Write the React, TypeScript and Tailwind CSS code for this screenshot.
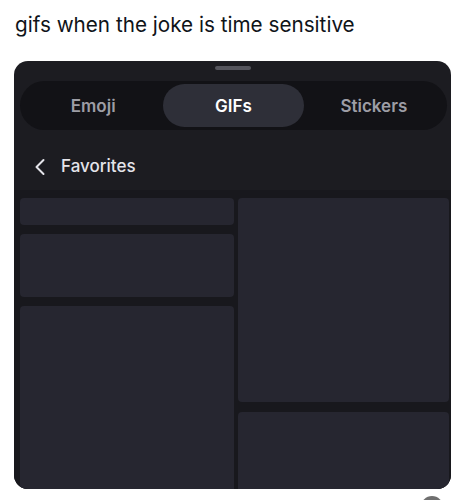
import { useState } from "react";

const tabs = ["Emoji", "GIFs", "Stickers"];

function Tile({ className }: { className: string }) {
  return <div className={`rounded-[4px] bg-[#262630] ${className}`} />;
}

export default function App() {
  const [active, setActive] = useState("GIFs");

  return (
    <main className="min-h-screen bg-white font-['Inter',sans-serif]">
      <p className="px-[15px] pt-[12px] text-[20.7px] leading-[26px] text-[#0f1419] font-['Inter',sans-serif]">
        gifs when the joke is time sensitive
      </p>

      {/* Picker panel */}
      <section className="ml-[14px] mt-[23px] flex h-[428px] w-[437px] flex-col overflow-hidden rounded-[14px] bg-[#1c1c21]">
        <div className="mx-auto mt-[5px] h-[4px] w-[36px] rounded-full bg-[#55555d]" />

        <div className="ml-[6px] mr-[4px] mt-[11px] grid h-[49px] grid-cols-3 rounded-full bg-[#121216] p-[3px]">
          {tabs.map((t) => (
            <button
              key={t}
              onClick={() => setActive(t)}
              className={`rounded-full pt-[3px] text-[17px] font-semibold ${
                active === t ? "bg-[#2e2f38] text-white" : "text-[#9d9da5]"
              }`}
            >
              {t}
            </button>
          ))}
        </div>

        <div className="flex h-[60px] items-center pl-[16px] pt-[13px]">
          <svg width="20" height="20" viewBox="0 0 20 20" fill="none">
            <path d="M13.5 3 L6.5 10 L13.5 17" stroke="#e4e4ea" strokeWidth="2" strokeLinecap="round" strokeLinejoin="round" />
          </svg>
          <span className="ml-[11px] text-[17px] font-medium text-[#e4e4ea]">Favorites</span>
        </div>

        {/* Favorites grid */}
        <div className="flex flex-1 gap-[4px] bg-[#18181d] pl-[6px] pr-[2px] pt-[8px]">
          <div className="flex w-[214px] flex-col gap-[9px]">
            <Tile className="h-[27px]" />
            <Tile className="h-[63px]" />
            <Tile className="flex-1 rounded-b-none" />
          </div>
          <div className="flex flex-1 flex-col gap-[10px]">
            <Tile className="h-[204px]" />
            <Tile className="flex-1 rounded-b-none" />
          </div>
        </div>
      </section>

      <div className="mt-[7px] flex justify-end pr-[21px]">
        <div className="h-[22px] w-[22px] rounded-full bg-[#6f6f6f]" />
      </div>
    </main>
  );
}
